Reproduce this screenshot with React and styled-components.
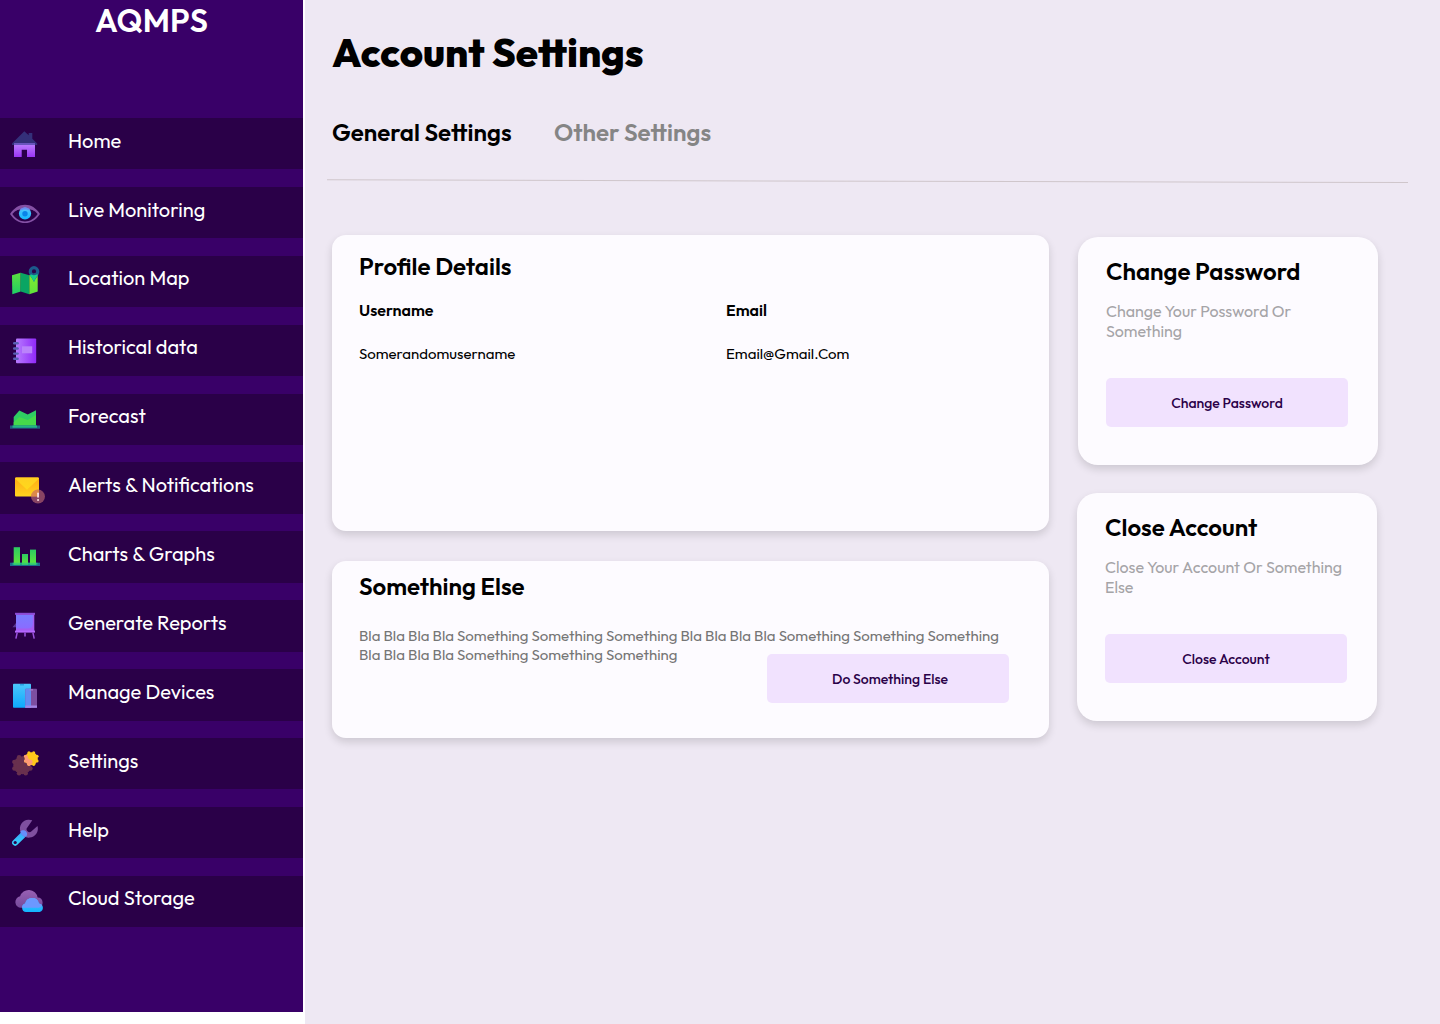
import React from 'react';
import styled, { createGlobalStyle } from 'styled-components';

const GlobalStyle = createGlobalStyle`
  *, *::before, *::after { box-sizing: border-box; }
  body { margin: 0; background: #fff; overflow: hidden; }
`;

const Page = styled.div`
  display: flex;
  justify-content: space-between;
  width: 1440px;
  height: 1024px;
  background: #fff;
  color: #000;
  font-family: Outfit, Lato, sans-serif;
`;

const Sidebar = styled.aside`
  width: 303px;
  height: 1012px;
  background: #390068;
  color: #fff;
`;

const Brand = styled.div`
  height: 118px;
  padding-top: 1px;
  text-align: center;
  font-size: 32px;
  line-height: 38px;
  font-weight: 600;
`;

const Nav = styled.nav`
  display: flex;
  flex-direction: column;
  gap: 17.5px;
`;

const NavItem = styled.a`
  display: flex;
  height: 51.4px;
  padding-left: 8px;
  background: #2a0048;
`;

const NavIcon = styled.svg`
  width: 40px;
  height: 51px;
  margin-right: 20px;
  flex: none;
`;

const NavLabel = styled.span`
  padding-top: 10.68px;
  font-size: 20px;
  line-height: 24px;
  font-weight: 400;
  white-space: nowrap;
`;

const Main = styled.main`
  width: 1135px;
  height: 1024px;
  padding: 28px 0 0 27px;
  background: #eee8f3;
`;

const Title = styled.h1`
  margin: 0;
  font-size: 40px;
  line-height: 48px;
  font-weight: 800;
`;

const Tabs = styled.div`
  display: flex;
  gap: 42.4px;
  margin-top: 42px;
`;

const Tab = styled.span`
  font-size: 24px;
  line-height: 29px;
  font-weight: 600;
  color: ${(p) => (p.$active ? '#000' : '#858585')};
`;

const Divider = styled.hr`
  width: 1081px;
  height: 1px;
  margin: 34px 0 0 -5px;
  border: 0;
  background: #cfc6cb;
  transform: translateY(-0.3px) rotate(0.15deg);
`;

const Columns = styled.div`
  display: flex;
  gap: 29px;
  margin-top: 53px;
`;

const Column = styled.div`
  display: flex;
  flex-direction: column;
  gap: ${(p) => p.$gap}px;
  padding-top: ${(p) => p.$top || 0}px;
`;

const Card = styled.section`
  display: flex;
  flex-direction: column;
  border-radius: 14px;
  background: #fdfbff;
  box-shadow: 0 4px 8px rgba(0, 0, 0, 0.14);
`;

const ProfileCard = styled(Card)`
  width: 717px;
  height: 296px;
  padding: 17px 27px;
`;

const ExtraCard = styled(Card)`
  width: 717px;
  height: 177px;
  padding: 11px 40px 0 27px;
`;

const ActionCard = styled(Card)`
  width: 300px;
  height: 228px;
  padding: 20px 30px 0 28px;
  border-radius: 20px;
  margin-left: ${(p) => p.$shift || 0}px;
`;

const Heading = styled.h2`
  margin: 0;
  font-size: 24px;
  line-height: 29px;
  font-weight: 600;
  white-space: nowrap;
`;

const Fields = styled.div`
  display: grid;
  grid-template-columns: 367px 1fr;
  margin-top: 20px;
`;

const Field = styled.div`
  display: flex;
  flex-direction: column;
  gap: 25px;
`;

const FieldName = styled.span`
  font-size: 16px;
  line-height: 19px;
  font-weight: 600;
`;

const FieldValue = styled.span`
  font-size: 15px;
  line-height: 18px;
  font-weight: 400;
`;

const Note = styled.p`
  margin: 25px 0 0;
  font-size: 15px;
  line-height: 19px;
  font-weight: 400;
  color: #757575;
`;

const Hint = styled.p`
  height: 40px;
  margin: 15px 0 37px;
  font-size: 16px;
  line-height: 20px;
  font-weight: 400;
  color: #a5a4a7;
`;

const Button = styled.button`
  flex: none;
  width: 242px;
  height: 49px;
  padding: 2px 0 0;
  border: 0;
  border-radius: 5px;
  background: #f1e2fe;
  color: #2a0048;
  font: 500 14px/17px Outfit, Lato, sans-serif;
`;

const OverlapButton = styled(Button)`
  align-self: flex-end;
  margin-top: -10px;
  padding-left: 4px;
`;

function gearCircles(cx, cy, r, teeth) {
  const bumps = Array.from({ length: teeth }, (_, i) => {
    const a = ((i + 0.5) / teeth) * Math.PI * 2;
    return (
      <circle
        key={i}
        cx={cx + r * 0.8 * Math.cos(a)}
        cy={cy + r * 0.8 * Math.sin(a)}
        r={r * 0.21}
      />
    );
  });
  return [<circle key="core" cx={cx} cy={cy} r={r * 0.84} />, ...bumps];
}

const bigGear = gearCircles(22.4, 27.2, 10.8, 8);
const smallGear = gearCircles(31.3, 20.6, 7.7, 8);

const Gradient = ({ id, from, to, across }) => (
  <linearGradient id={id} x1="0" y1="0" x2={across ? 1 : 0} y2={across ? 0 : 1}>
    <stop offset="0" stopColor={from} />
    <stop offset="1" stopColor={to} />
  </linearGradient>
);

const icons = {
  home: (
    <>
      <Gradient id="homeBody" from="#c084ff" to="#9a35f5" />
      <path d="M14 25h21v14h-8v-7.3h-5.3V39H14z" fill="url(#homeBody)" />
      <path d="M24.3 13.2l4.4 4V15h3.6v5.8l4.9 4.7v1.4H12v-1.4z" fill="#34307a" />
      <path d="M14 25h21v2H14z" fill="#6a55bd" />
    </>
  ),
  eye: (
    <>
      <Gradient id="iris" from="#5ac8fa" to="#11b7ff" />
      <path d="M10 27c4-6 9-9.2 15-9.2S36 21 40 27c-4 6-9 9.1-15 9.1S14 33 10 27zm2.3 0c3.5 5 7.7 7.4 12.7 7.4S34.2 32 37.7 27c-3-4-7.5-6-12.7-6s-9.7 2-12.7 6z" fill="#8551a5" fillRule="evenodd" />
      <path d="M14.5 24.5C17 21 20.5 19 25 19s8 2 10.5 5.500c-3-1.800-6.500-2.700-10.500-2.700s-7.500.9-10.500 2.700z" fill="#8551a5" />
      <circle cx="25" cy="26.5" r="6.1" fill="url(#iris)" />
      <path d="M19.5 24a6.1 6.1 0 0 1 11 0c-3-2-8-2-11 0z" fill="#6c8df2" />
      <circle cx="25" cy="26.8" r="2.7" fill="#0a84e8" />
    </>
  ),
  map: (
    <>
      <Gradient id="mapLeft" from="#5be03e" to="#1fce66" />
      <Gradient id="mapRight" from="#86ea2f" to="#5ee23c" />
      <path d="M12 19.2l8.7-2.5v18.8L12.3 38.3z" fill="url(#mapLeft)" />
      <path d="M20.7 16.7l8.6 2.5v19.1l-8.6-2.8z" fill="#0aa563" />
      <path d="M29.3 19.2l8.4-2.5v18.8l-8.4 2.8z" fill="url(#mapRight)" />
      <path d="M34 10.1a5.3 5.3 0 0 1 5.3 5.3c0 3.7-3.6 6-5.3 10.6-1.7-4.6-5.3-6.9-5.3-10.6A5.3 5.3 0 0 1 34 10.1zm0 3.2a2.1 2.1 0 1 0 0 4.2 2.1 2.1 0 0 0 0-4.2z" fill="#1c5a8c" fillRule="evenodd" />
      <path d="M29.7 18.9l1.7-.5c1.6 1 3.6 1 5.2 0l1.500.2c-1.200 2.300-3.200 4.300-4.100 7.400-1-3-3-5-4.300-7.100z" fill="#16cf8c" />
    </>
  ),
  notebook: (
    <>
      <Gradient id="cover" from="#b77bff" to="#9029f8" across />
      <rect x="16" y="13.6" width="20.2" height="24.6" rx="1" fill="url(#cover)" />
      <rect x="22" y="21.3" width="10.2" height="7" fill="#ba83fb" />
      {[18.3, 23.5, 28.6, 33.7].map((y) => (
        <rect key={y} x="13" y={y - 1.2} width="5.8" height="2.4" rx="1.2" fill="#5960b5" />
      ))}
    </>
  ),
  forecast: (
    <>
      <path d="M13.7 23l5.6-6.6 8.4 4L36 16.2V34H13.7z" fill="#2fcd63" />
      <path d="M13.7 28.2l5.6-5.2 8.4 3L36 21v11H13.7z" fill="#46da4b" />
      <rect x="10" y="31.5" width="30" height="3.2" fill="#215f80" />
      <rect x="12.5" y="31.5" width="24.5" height="2.2" fill="#22b884" />
    </>
  ),
  alert: (
    <>
      <Gradient id="envelope" from="#ffa914" to="#ffd51f" />
      <Gradient id="flap" from="#ffcf22" to="#ffd91b" />
      <rect x="15" y="15.5" width="24" height="19" rx="1" fill="url(#envelope)" />
      <path d="M15 16.5l.8-1h22.4l.8 1L27 27.8z" fill="url(#flap)" />
      <circle cx="38" cy="34.6" r="7" fill="#b56470" fillOpacity="0.68" />
      <path d="M31.1 34.5a7 7 0 0 1 7.9-6.8v6.8z" fill="#e58a43" fillOpacity="0.65" />
      <rect x="37.2" y="30.5" width="1.7" height="5.3" rx=".8" fill="#ffe4e8" />
      <circle cx="38.05" cy="38" r="1" fill="#ffe4e8" />
    </>
  ),
  charts: (
    <>
      <Gradient id="bars" from="#2cca62" to="#62e63a" />
      <rect x="10" y="31.7" width="30" height="3.3" fill="#1b6f8c" />
      <rect x="13.7" y="16.2" width="6.3" height="17.5" fill="url(#bars)" />
      <rect x="22" y="23" width="6" height="10.7" fill="url(#bars)" />
      <rect x="30" y="18.6" width="6" height="15.1" fill="url(#bars)" />
      <rect x="12.5" y="31.7" width="25" height="2.1" fill="#25c983" fillOpacity=".7" />
    </>
  ),
  report: (
    <>
      <Gradient id="board" from="#7a7cff" to="#8a6cff" />
      <path d="M16 23v4.3h-3.6z" fill="#593593" />
      <rect x="16" y="14" width="18.3" height="17" fill="#a45cf0" />
      <path d="M16 15h16.8v9c0 3-2 4.6-5 4.6H16z" fill="url(#board)" />
      <rect x="15" y="12.8" width="20" height="2" fill="#8a4bd5" />
      <rect x="15" y="30.6" width="20" height="2" fill="#b566ff" />
      <path d="M17.2 32.6l-1.3 6M32.9 32.6l1.3 6M25 32.6v4" stroke="#9b52de" strokeWidth="1.5" fill="none" />
    </>
  ),
  devices: (
    <>
      <Gradient id="tablet" from="#4cc6fb" to="#0da8fc" />
      <rect x="13" y="14.8" width="18" height="24" rx=".8" fill="url(#tablet)" />
      <rect x="20" y="15" width="4" height="1.5" fill="#2a9fe0" />
      <rect x="25.3" y="19.8" width="11.7" height="19" rx=".8" fill="#7d4ea0" />
      <path d="M25.3 19.8H31v19h-5.7z" fill="#638cf0" />
      <path d="M25.3 36.5H37v2.3H25.3z" fill="#a384e4" />
      <rect x="29.5" y="20.3" width="3.5" height="1.2" fill="#a67fd0" />
    </>
  ),
  settings: (
    <>
      <clipPath id="gearClip">{bigGear}</clipPath>
      <g fill="#68304e">{bigGear}</g>
      <g fill="#ffc81a">{smallGear}</g>
      <g clipPath="url(#gearClip)" fill="#ff9a76">{smallGear}</g>
    </>
  ),
  help: (
    <>
      <Gradient id="handle" from="#3aa7fb" to="#35ccfa" />
      <path d="M24.5 26.5L15.2 35.6" stroke="url(#handle)" strokeWidth="6.2" strokeLinecap="round" />
      <circle cx="15.2" cy="35.5" r="1.6" fill="#2a0048" />
      <path d="M32.3 13.3a9 9 0 1 0 5.2 5.7l-6 5.3a2.8 2.8 0 0 1-4-4z" fill="#7f509f" />
      <path d="M20.3 24.7c1.6-2 4.9-1.7 6.3.5 1.1 1.7.5 3.6-.8 4.6-2.8-.6-4.9-2.5-5.5-5.1z" fill="#668ffb" />
    </>
  ),
  cloud: (
    <>
      <Gradient id="cloudBack" from="#9861b4" to="#754a9b" />
      <Gradient id="cloudFront" from="#4fc5fb" to="#12b4fe" />
      <clipPath id="cloudClip">
        <path d="M21 31.8a5.8 5.8 0 0 1-.9-11.5 9 9 0 0 1 17.5 1.2 5.2 5.2 0 0 1 .8 10.3z" />
      </clipPath>
      <path d="M21 31.8a5.8 5.8 0 0 1-.9-11.5 9 9 0 0 1 17.5 1.2 5.2 5.2 0 0 1 .8 10.3z" fill="url(#cloudBack)" />
      <path d="M26 36a4.3 4.3 0 0 1-.8-8.4 7 7 0 0 1 13.7-.2A4.4 4.4 0 0 1 39.7 36z" fill="url(#cloudFront)" />
      <path d="M26 36a4.3 4.3 0 0 1-.8-8.4 7 7 0 0 1 13.7-.2A4.4 4.4 0 0 1 39.7 36z" fill="#6c98ff" clipPath="url(#cloudClip)" />
    </>
  ),
};

const navItems = [
  ['home', 'Home'],
  ['eye', 'Live Monitoring'],
  ['map', 'Location Map'],
  ['notebook', 'Historical data'],
  ['forecast', 'Forecast'],
  ['alert', 'Alerts & Notifications'],
  ['charts', 'Charts & Graphs'],
  ['report', 'Generate Reports'],
  ['devices', 'Manage Devices'],
  ['settings', 'Settings'],
  ['help', 'Help'],
  ['cloud', 'Cloud Storage'],
];

export default function App() {
  return (
    <Page>
      <GlobalStyle />
      <Sidebar>
        <Brand>AQMPS</Brand>
        <Nav>
          {navItems.map(([icon, label]) => (
            <NavItem key={icon}>
              <NavIcon viewBox="8 0 40 51" aria-hidden="true">{icons[icon]}</NavIcon>
              <NavLabel>{label}</NavLabel>
            </NavItem>
          ))}
        </Nav>
      </Sidebar>
      <Main>
        <Title>Account Settings</Title>
        <Tabs>
          <Tab $active>General Settings</Tab>
          <Tab>Other Settings</Tab>
        </Tabs>
        <Divider />
        <Columns>
          <Column $gap={30}>
            <ProfileCard>
              <Heading>Profile Details</Heading>
              <Fields>
                <Field>
                  <FieldName>Username</FieldName>
                  <FieldValue>Somerandomusername</FieldValue>
                </Field>
                <Field>
                  <FieldName>Email</FieldName>
                  <FieldValue>Email@Gmail.Com</FieldValue>
                </Field>
              </Fields>
            </ProfileCard>
            <ExtraCard>
              <Heading>Something Else</Heading>
              <Note>
                Bla Bla Bla Bla Something Something Something Bla Bla Bla Bla Something Something
                Something Bla Bla Bla Bla Something Something Something
              </Note>
              <OverlapButton>Do Something Else</OverlapButton>
            </ExtraCard>
          </Column>
          <Column $gap={28} $top={2}>
            <ActionCard>
              <Heading>Change Password</Heading>
              <Hint>Change Your Possword Or Something</Hint>
              <Button>Change Password</Button>
            </ActionCard>
            <ActionCard $shift={-1}>
              <Heading>Close Account</Heading>
              <Hint>Close Your Account Or Something Else</Hint>
              <Button>Close Account</Button>
            </ActionCard>
          </Column>
        </Columns>
      </Main>
    </Page>
  );
}
